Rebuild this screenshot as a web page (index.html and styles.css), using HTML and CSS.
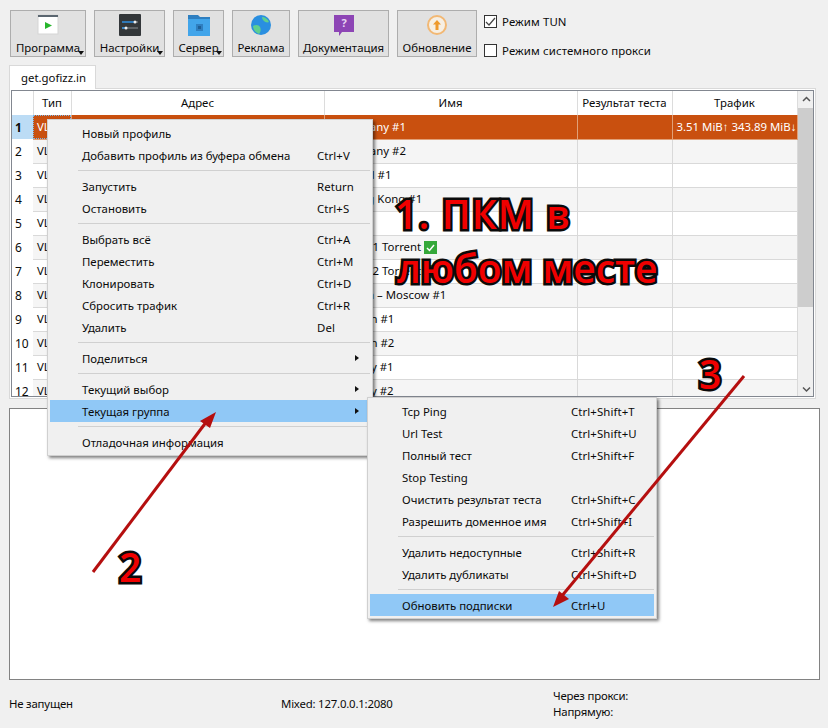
FILE: index.html
```html
<!DOCTYPE html>
<html lang="en">
<head>
    <meta charset="UTF-8" />
    <title>nekoray</title>
    <link rel="stylesheet" href="styles.css">
</head>
<body>

<div class="toolbar">
    <button class="tool w-prog has-menu">
        <svg width="22" height="22" viewBox="0 0 22 22"><rect x="1" y="1" width="20" height="19" fill="#fff" stroke="#d5d5d5"/><rect x="1" y="1" width="20" height="2" fill="#5b6670"/><path d="M8 8l7 3.500-7 3.500z" fill="#27b52c"/></svg>
        <span>Программа</span>
    </button>
    <button class="tool w-set has-menu">
        <svg width="22" height="22" viewBox="0 0 22 22"><rect width="22" height="22" rx="1" fill="#33373a"/><path d="M3 8h13" stroke="#2f8fe0" stroke-width="1.500"/><path d="M16 8h3M3 14h3" stroke="#8a8f92"/><path d="M6 14h13" stroke="#8a8f92"/><path d="M3 14h5" stroke="#2f8fe0" stroke-width="1.500"/><circle cx="16" cy="8" r="1.500" fill="#eee"/><circle cx="7" cy="14" r="1.500" fill="#eee"/></svg>
        <span>Настройки</span>
    </button>
    <button class="tool w-srv has-menu">
        <svg width="22" height="22" viewBox="0 0 22 22"><path d="M0 1h10l2 2h10v19H0z" fill="#2f7fc0"/><rect y="5" width="22" height="17" fill="#42a5ea"/><rect x="8" y="10" width="7" height="7" fill="#2f7fc0"/><rect x="10" y="12" width="3" height="3" fill="#1e5f96"/></svg>
        <span>Сервер</span>
    </button>
    <button class="tool w-ad">
        <svg width="22" height="22" viewBox="0 0 22 22"><circle cx="11" cy="11" r="10" fill="#2a8fe0"/><path d="M3 12c3-2 6-1 7 1s1 5-1 7c-3-1-6-4-6-8zM12 3c3 0 6 2 7 5-2 1-4 0-5-1s-2-2-2-4z" fill="#5fcf8f"/></svg>
        <span>Реклама</span>
    </button>
    <button class="tool w-doc">
        <svg width="22" height="22" viewBox="0 0 22 22"><path d="M1 1h20v17H9l-3 4v-4H1z" fill="#8d45b5"/><text x="11" y="13" class="doc-mark">?</text></svg>
        <span>Документация</span>
    </button>
    <button class="tool w-upd">
        <svg width="22" height="22" viewBox="0 0 22 22"><circle cx="11" cy="11" r="9" fill="#f6efe4" stroke="#f2b874" stroke-width="2"/><path d="M11 6l4 4.500h-2.500V16h-3v-5.500H7z" fill="#ee9a2d"/></svg>
        <span>Обновление</span>
    </button>
    <div class="modes">
        <label class="mode"><span class="box"><svg width="13" height="13" viewBox="0 0 13 13"><path d="M2 7l3 3 6-7" fill="none" stroke="#444" stroke-width="1.200"/></svg></span>Режим TUN</label>
        <label class="mode"><span class="box"></span>Режим системного прокси</label>
    </div>
</div>

<div class="tabs"><div class="tab">get.gofizz.in</div></div>

<div class="frame">
    <div class="frame-in">
        <table class="profiles">
            <colgroup>
                <col class="c-num"><col class="c-type"><col class="c-addr"><col class="c-name"><col class="c-test"><col class="c-traffic">
            </colgroup>
            <thead>
                <tr><th></th><th>Тип</th><th>Адрес</th><th>Имя</th><th>Результат теста</th><th>Трафик</th></tr>
            </thead>
            <tbody>
                <tr class="running"><th>1</th><td class="focus">VLESS</td><td></td><td>D Germany #1</td><td></td><td>3.51 MiB↑ 343.89 MiB↓</td></tr>
                <tr><th>2</th><td>VLESS</td><td></td><td>D Germany #2</td><td></td><td></td></tr>
                <tr><th>3</th><td>VLESS</td><td></td><td>I Finland #1</td><td></td><td></td></tr>
                <tr><th>4</th><td>VLESS</td><td></td><td>AS Hong Kong #1</td><td></td><td></td></tr>
                <tr><th>5</th><td>VLESS</td><td></td><td></td><td></td><td></td></tr>
                <tr><th>6</th><td>VLESS</td><td></td><td>Serbia #1 Torrent <svg class="ok" width="13" height="13" viewBox="0 0 13 13"><rect width="13" height="13" fill="#35a83a"/><path d="M3 7l2.500 2.500L10 4" fill="none" stroke="#fff" stroke-width="1.500"/></svg></td><td></td><td></td></tr>
                <tr><th>7</th><td>VLESS</td><td></td><td>Serbia #2 Torrent <svg class="ok" width="13" height="13" viewBox="0 0 13 13"><rect width="13" height="13" fill="#35a83a"/><path d="M3 7l2.500 2.500L10 4" fill="none" stroke="#fff" stroke-width="1.500"/></svg></td><td></td><td></td></tr>
                <tr><th>8</th><td>VLESS</td><td></td><td>D Russia – Moscow #1</td><td></td><td></td></tr>
                <tr><th>9</th><td>VLESS</td><td></td><td>I Sweden #1</td><td></td><td></td></tr>
                <tr><th>10</th><td>VLESS</td><td></td><td>I Sweden #2</td><td></td><td></td></tr>
                <tr><th>11</th><td>VLESS</td><td></td><td>I Norway #1</td><td></td><td></td></tr>
                <tr><th>12</th><td>VLESS</td><td></td><td>I Norway #2</td><td></td><td></td></tr>
            </tbody>
        </table>
        <div class="scroll">
            <svg width="17" height="17" viewBox="0 0 17 17"><path d="M5 10l3.500-3.500L12 10" fill="none" stroke="#555" stroke-width="1.500"/></svg>
            <div class="thumb"></div>
            <svg width="17" height="17" viewBox="0 0 17 17"><path d="M5 8.500l3.500 3.500L12 8.500" fill="none" stroke="#555" stroke-width="1.500"/></svg>
        </div>
    </div>
</div>

<div class="log"></div>

<div class="status">
    <div class="st-run">Не запущен</div>
    <div class="st-port">Mixed: 127.0.0.1:2080</div>
    <div class="st-speed">
        <div>Через прокси:</div>
        <div>Напрямую:</div>
    </div>
</div>

<!-- context menus -->
<div class="menu menu-main">
    <div class="item"><span>Новый профиль</span></div>
    <div class="item"><span>Добавить профиль из буфера обмена</span><span class="key">Ctrl+V</span></div>
    <div class="sep"></div>
    <div class="item"><span>Запустить</span><span class="key">Return</span></div>
    <div class="item"><span>Остановить</span><span class="key">Ctrl+S</span></div>
    <div class="sep"></div>
    <div class="item"><span>Выбрать всё</span><span class="key">Ctrl+A</span></div>
    <div class="item"><span>Переместить</span><span class="key">Ctrl+M</span></div>
    <div class="item"><span>Клонировать</span><span class="key">Ctrl+D</span></div>
    <div class="item"><span>Сбросить трафик</span><span class="key">Ctrl+R</span></div>
    <div class="item"><span>Удалить</span><span class="key">Del</span></div>
    <div class="sep"></div>
    <div class="item sub"><span>Поделиться</span></div>
    <div class="sep"></div>
    <div class="item sub"><span>Текущий выбор</span></div>
    <div class="item sub active"><span>Текущая группа</span></div>
    <div class="sep"></div>
    <div class="item"><span>Отладочная информация</span></div>
</div>

<div class="menu menu-group">
    <div class="item"><span>Tcp Ping</span><span class="key">Ctrl+Shift+T</span></div>
    <div class="item"><span>Url Test</span><span class="key">Ctrl+Shift+U</span></div>
    <div class="item"><span>Полный тест</span><span class="key">Ctrl+Shift+F</span></div>
    <div class="item"><span>Stop Testing</span></div>
    <div class="item"><span>Очистить результат теста</span><span class="key">Ctrl+Shift+C</span></div>
    <div class="item"><span>Разрешить доменное имя</span><span class="key">Ctrl+Shift+I</span></div>
    <div class="sep"></div>
    <div class="item"><span>Удалить недоступные</span><span class="key">Ctrl+Shift+R</span></div>
    <div class="item"><span>Удалить дубликаты</span><span class="key">Ctrl+Shift+D</span></div>
    <div class="sep"></div>
    <div class="item active"><span>Обновить подписки</span><span class="key">Ctrl+U</span></div>
</div>

<!-- annotations drawn on top of the screenshot -->
<div class="note note-1">1. ПКМ в</div>
<div class="note note-1b">любом месте</div>
<div class="note note-2">2</div>
<div class="note note-3">3</div>
<svg class="arrows" width="828" height="728" viewBox="0 0 828 728">
    <path d="M93 572L207 421" stroke="#b50f0f" stroke-width="3" fill="none"/>
    <path d="M216 412L200 421L210 428z" fill="#b50f0f"/>
    <path d="M744 376L561 597" stroke="#b50f0f" stroke-width="3" fill="none"/>
    <path d="M553 607L559 591L569 599z" fill="#b50f0f"/>
</svg>

</body>
</html>
```

FILE: styles.css
```css
* {
    box-sizing: border-box;
}
html, body {
    margin: 0;
    height: 728px;
    overflow: hidden;
}
body {
    position: relative;
    background: #f0f0f0;
    font-family: "Noto Sans", Arial, sans-serif;
    font-size: 11.4px;
    color: #0a0a0a;
}

/* toolbar */
.toolbar {
    display: flex;
    gap: 8px;
    padding: 10px 0 0 10px;
    height: 65px;
}
.tool {
    position: relative;
    display: flex;
    flex-direction: column;
    align-items: center;
    height: 47px;
    padding: 3px 0 0;
    background: #e1e1e1;
    border: 1px solid #adadad;
    font: inherit;
    color: inherit;
}
.tool span {
    margin-top: 4px;
    line-height: 15px;
    white-space: nowrap;
}
.has-menu::after {
    content: "";
    position: absolute;
    right: 1px;
    bottom: 1px;
    border: 3px solid transparent;
    border-top: 4px solid #111;
    border-bottom: 0;
}
.w-prog { width: 76px; }
.w-set { width: 71px; }
.w-srv { width: 51px; }
.w-ad { width: 58px; }
.w-doc { width: 91px; }
.w-upd { width: 80px; }
.doc-mark {
    font-size: 11px;
    font-weight: 700;
    fill: #e8d5f2;
    text-anchor: middle;
}
.modes {
    display: flex;
    flex-direction: column;
    gap: 14px;
    margin: 4px 0 0 -1px;
}
.mode {
    display: flex;
    align-items: center;
    gap: 5px;
    height: 15px;
    white-space: nowrap;
    letter-spacing: 0.12px;
}
.box {
    width: 13px;
    height: 13px;
    background: #fff;
    border: 1px solid #333;
    display: block;
}
.box svg {
    display: block;
    margin: -1px;
}

/* tab + table */
.tabs {
    padding-left: 9px;
    height: 24px;
}
.tab {
    width: 87px;
    height: 24px;
    padding: 4px 0 0 11px;
    background: #fff;
    border: 1px solid #d9d9d9;
    border-bottom: 0;
    position: relative;
    z-index: 1;
}
.frame {
    margin: -1px 0 0 9px;
    width: 807px;
    height: 311px;
    padding: 1px;
    background: #fff;
    border: 1px solid #d9d9d9;
}
.frame-in {
    display: flex;
    height: 100%;
    overflow: hidden;
    border: 1px solid #828790;
}
.profiles {
    table-layout: fixed;
    border-collapse: collapse;
    width: 785px;
    flex: none;
    height: 0;
}
.c-num { width: 21px; }
.c-type { width: 38px; }
.c-addr { width: 253px; }
.c-name { width: 253px; }
.c-test { width: 95px; }
.c-traffic { width: 125px; }
.profiles th,
.profiles td {
    height: 24px;
    padding: 0 0 1px;
    overflow: hidden;
    white-space: nowrap;
    font-weight: 400;
}
.profiles thead th {
    text-align: center;
    background: #fff;
    border-right: 1px solid #dcdcdc;
}
.profiles tbody th {
    text-align: left;
    padding: 0 0 0 3px;
    background: #fff;
    font-size: 12px;
}
.profiles td {
    padding-left: 4px;
    border: 1px solid #d9d9d9;
    border-width: 0 1px 1px 0;
    background: #fff;
}
.profiles tbody tr:nth-child(even) td {
    background: #f5f5f5;
}
.profiles tr.running td {
    background: #c9500f;
    color: #fff;
    border-color: #e0a078;
}
.profiles tr.running th {
    background: #bcdcf5;
    font-weight: 700;
}
.profiles td.focus {
    outline: 1px dotted #7db8e8;
    outline-offset: -1px;
}
.ok {
    vertical-align: -3px;
}
.scroll {
    flex: 1;
    display: flex;
    flex-direction: column;
    background: #f0f0f0;
}
.thumb {
    flex: none;
    height: 199px;
    background: #cdcdcd;
}
.scroll svg:last-child {
    margin-top: auto;
}

/* log + status */
.log {
    width: 811px;
    height: 272px;
    margin: 9px 0 0 9px;
    background: #fff;
    border: 1px solid #828282;
}
.status {
    display: flex;
    padding-left: 9px;
    letter-spacing: -0.2px;
    position: relative;
}
.st-run {
    width: 272px;
    margin-top: 16px;
}
.st-port {
    width: 272px;
    margin-top: 16px;
}
.st-speed {
    margin-top: 8px;
    line-height: 16px;
}

/* context menus */
.menu {
    position: absolute;
    z-index: 5;
    padding: 2px 2px;
    background: #f0f0f0;
    border: 1px solid #d0d0d0;
    box-shadow: 2px 2px 3px rgba(0, 0, 0, 0.5);
}
.menu-main {
    left: 47px;
    top: 119px;
    width: 326px;
    height: 337px;
}
.menu-group {
    left: 367px;
    top: 397px;
    width: 290px;
    height: 222px;
}
.item {
    position: relative;
    display: flex;
    height: 22px;
    align-items: center;
    padding-left: 32px;
}
.item > span:first-child {
    white-space: nowrap;
}
.key {
    position: absolute;
    white-space: nowrap;
    letter-spacing: 0.1px;
}
.menu-main .key { left: 267px; }
.menu-group .key { left: 201px; }
.item.active {
    background: #90c8f6;
}
.sub::after {
    content: "";
    position: absolute;
    right: 11px;
    top: 8px;
    border: 3.500px solid transparent;
    border-left: 4px solid #111;
    border-right: 0;
}
.sep {
    height: 1px;
    margin: 4px 0 4px 28px;
    background: #d0d0d0;
}

/* annotations */
.note {
    position: absolute;
    z-index: 6;
    font-family: "Open Sans", Arial, sans-serif;
    font-weight: 600;
    font-size: 39px;
    line-height: 46px;
    white-space: nowrap;
    color: #f00000;
    -webkit-text-stroke: 5px #0a0a0a;
    paint-order: stroke fill;
}
.note-1 { left: 395px; top: 191px; letter-spacing: 1.2px; }
.note-1b { left: 397px; top: 245px; }
.note-2 { left: 119px; top: 544px; }
.note-3 { left: 699px; top: 351px; }
.arrows {
    position: absolute;
    left: 0;
    top: 0;
    z-index: 7;
}
```
